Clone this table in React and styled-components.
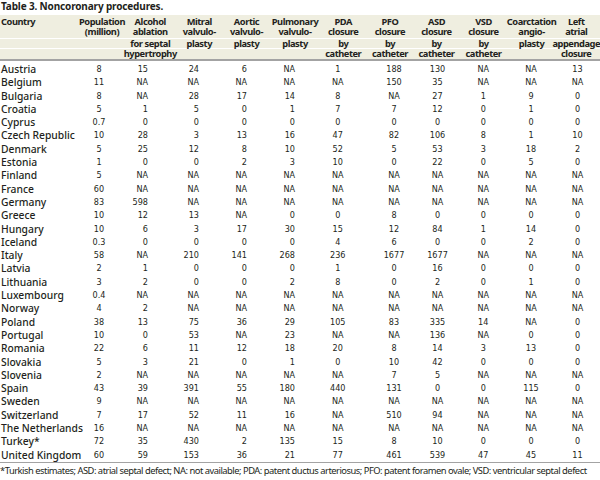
import styled, { createGlobalStyle } from 'styled-components';

const GlobalStyle = createGlobalStyle`
  html, body { margin: 0; padding: 0; background: #fff; }
`;

// header columns (centred labels)
const HEAD_COLS = '79px 46px 50.5px 47.5px 47px 50px 46.5px 47px 46px 48px 48px 44.5px';
// body columns
const BODY_COLS = '79px 40px 29px 51px 48px 73px 45.5px 50px 44px 47.5px 48px 45px';

// [justify, padding-left, padding-right] for each body column
const BODY_ALIGN = [
  ['flex-start', 1, 0],
  ['center', 0, 0],
  ['flex-end', 0, 0],
  ['flex-end', 0, 0],
  ['flex-end', 0, 0],
  ['flex-end', 0, 25],
  ['center', 0, 10],
  ['center', 7, 0],
  ['center', 0, 0],
  ['center', 0, 0],
  ['center', 0, 0],
  ['center', 0, 0],
];

const HEAD = [
  ['Country', '', '', ''],
  ['Population', '(million)', '', ''],
  ['Alcohol', 'ablation', 'for septal', 'hypertrophy'],
  ['Mitral', 'valvulo-', 'plasty', ''],
  ['Aortic', 'valvulo-', 'plasty', ''],
  ['Pulmonary', 'valvulo-', 'plasty', ''],
  ['PDA', 'closure', 'by', 'catheter'],
  ['PFO', 'closure', 'by', 'catheter'],
  ['ASD', 'closure', 'by', 'catheter'],
  ['VSD', 'closure', 'by', 'catheter'],
  ['Coarctation', 'angio-', 'plasty', ''],
  ['Left', 'atrial', 'appendage', 'closure'],
];

const ROWS = [
  ['Austria', '8', '15', '24', '6', 'NA', '1', '188', '130', 'NA', 'NA', '13'],
  ['Belgium', '11', 'NA', 'NA', 'NA', 'NA', 'NA', '150', '35', 'NA', 'NA', 'NA'],
  ['Bulgaria', '8', 'NA', '28', '17', '14', '8', 'NA', '27', '1', '9', '0'],
  ['Croatia', '5', '1', '5', '0', '1', '7', '7', '12', '0', '1', '0'],
  ['Cyprus', '0.7', '0', '0', '0', '0', '0', '0', '0', '0', '0', '0'],
  ['Czech Republic', '10', '28', '3', '13', '16', '47', '82', '106', '8', '1', '10'],
  ['Denmark', '5', '25', '12', '8', '10', '52', '5', '53', '3', '18', '2'],
  ['Estonia', '1', '0', '0', '2', '3', '10', '0', '22', '0', '5', '0'],
  ['Finland', '5', 'NA', 'NA', 'NA', 'NA', 'NA', 'NA', 'NA', 'NA', 'NA', 'NA'],
  ['France', '60', 'NA', 'NA', 'NA', 'NA', 'NA', 'NA', 'NA', 'NA', 'NA', 'NA'],
  ['Germany', '83', '598', 'NA', 'NA', 'NA', 'NA', 'NA', 'NA', 'NA', 'NA', 'NA'],
  ['Greece', '10', '12', '13', 'NA', '0', '0', '8', '0', '0', '0', '0'],
  ['Hungary', '10', '6', '3', '17', '30', '15', '12', '84', '1', '14', '0'],
  ['Iceland', '0.3', '0', '0', '0', '0', '4', '6', '0', '0', '2', '0'],
  ['Italy', '58', 'NA', '210', '141', '268', '236', '1677', '1677', 'NA', 'NA', 'NA'],
  ['Latvia', '2', '1', '0', '0', '0', '1', '0', '16', '0', '0', '0'],
  ['Lithuania', '3', '2', '0', '0', '2', '8', '0', '2', '0', '1', '0'],
  ['Luxembourg', '0.4', 'NA', 'NA', 'NA', 'NA', 'NA', 'NA', 'NA', 'NA', 'NA', 'NA'],
  ['Norway', '4', '2', 'NA', 'NA', 'NA', 'NA', 'NA', 'NA', 'NA', 'NA', 'NA'],
  ['Poland', '38', '13', '75', '36', '29', '105', '83', '335', '14', 'NA', '0'],
  ['Portugal', '10', '0', '53', 'NA', '23', 'NA', 'NA', '136', 'NA', '0', '0'],
  ['Romania', '22', '6', '11', '12', '18', '20', '8', '14', '3', '13', '0'],
  ['Slovakia', '5', '3', '21', '0', '1', '0', '10', '42', '0', '0', '0'],
  ['Slovenia', '2', 'NA', 'NA', 'NA', 'NA', 'NA', '7', '5', 'NA', 'NA', 'NA'],
  ['Spain', '43', '39', '391', '55', '180', '440', '131', '0', '0', '115', '0'],
  ['Sweden', '9', 'NA', 'NA', 'NA', 'NA', 'NA', 'NA', 'NA', 'NA', 'NA', 'NA'],
  ['Switzerland', '7', '17', '52', '11', '16', 'NA', '510', '94', 'NA', 'NA', 'NA'],
  ['The Netherlands', '16', 'NA', 'NA', 'NA', 'NA', 'NA', 'NA', 'NA', 'NA', 'NA', 'NA'],
  ['Turkey*', '72', '35', '430', '2', '135', '15', '8', '10', '0', '0', '0'],
  ['United Kingdom', '60', '59', '153', '36', '21', '77', '461', '539', '47', '45', '11'],
];

const Page = styled.div`
  width: 600px;
  height: 480px;
  overflow: hidden;
  background: #fff;
  color: #231f20;
  font-family: 'Noto Sans', 'DejaVu Sans Condensed', sans-serif;
  font-stretch: 75%;
`;

const Title = styled.div`
  height: 15px;
  line-height: 13px;
  font-size: 10px;
  letter-spacing: -0.15px;
  font-weight: bold;
  padding-left: 1px;
`;

const Head = styled.div`
  background: #efeee0;
  padding-top: 1.5px;
  border-bottom: 2px solid #a3a3a3;
`;

const HeadRow = styled.div`
  display: grid;
  grid-template-columns: ${HEAD_COLS};
  height: 10.5px;
  line-height: 10.5px;
  font-size: 9.3px;
  letter-spacing: -0.45px;
  font-weight: bold;
  border-top: ${(p) => (p.$ruled ? '1px solid #fff' : '0')};
  box-sizing: border-box;
`;

const HeadCell = styled.div`
  display: flex;
  justify-content: ${(p) => (p.$first ? 'flex-start' : 'center')};
  padding-left: ${(p) => (p.$first ? '1px' : '0')};
  padding-right: ${(p) => (p.$last ? '3px' : '0')};
  white-space: nowrap;
  min-width: 0;
`;

const Body = styled.div`
  padding-top: 2.5px;
  border-bottom: 1px solid #a3a3a3;
`;

const Row = styled.div`
  display: grid;
  grid-template-columns: ${BODY_COLS};
  height: 13.3px;
  line-height: 13.3px;
`;

const Cell = styled.div`
  display: flex;
  justify-content: ${(p) => p.$justify};
  padding-left: ${(p) => p.$pl}px;
  padding-right: ${(p) => p.$pr}px;
  white-space: nowrap;
  min-width: 0;
`;

const Name = styled(Cell)`
  font-size: 10.3px;
  font-weight: 500;
`;

const Value = styled(Cell)`
  font-family: 'DejaVu Sans Condensed', 'DejaVu Sans', sans-serif;
  font-stretch: normal;
  font-size: 9px;
`;

const Note = styled.div`
  font-size: 9.4px;
  letter-spacing: -0.5px;
  line-height: 16px;
  white-space: nowrap;
`;

export default function App() {
  return (
    <Page>
      <GlobalStyle />
      <Title>Table 3. Noncoronary procedures.</Title>
      <Head>
        {[0, 1, 2, 3].map((line) => (
          <HeadRow key={line} $ruled={line >= 2}>
            {HEAD.map((col, i) => (
              <HeadCell key={i} $first={i === 0} $last={i === HEAD.length - 1}>
                <span>{col[line]}</span>
              </HeadCell>
            ))}
          </HeadRow>
        ))}
      </Head>
      <Body>
        {ROWS.map((row) => (
          <Row key={row[0]}>
            {row.map((v, i) => {
              const [justify, pl, pr] = BODY_ALIGN[i];
              const C = i === 0 ? Name : Value;
              return (
                <C key={i} $justify={justify} $pl={pl} $pr={pr}>
                  <span>{v}</span>
                </C>
              );
            })}
          </Row>
        ))}
      </Body>
      <Note>
        *Turkish estimates; ASD: atrial septal defect; NA: not available; PDA: patent ductus
        arteriosus; PFO: patent foramen ovale; VSD: ventricular septal defect
      </Note>
    </Page>
  );
}
